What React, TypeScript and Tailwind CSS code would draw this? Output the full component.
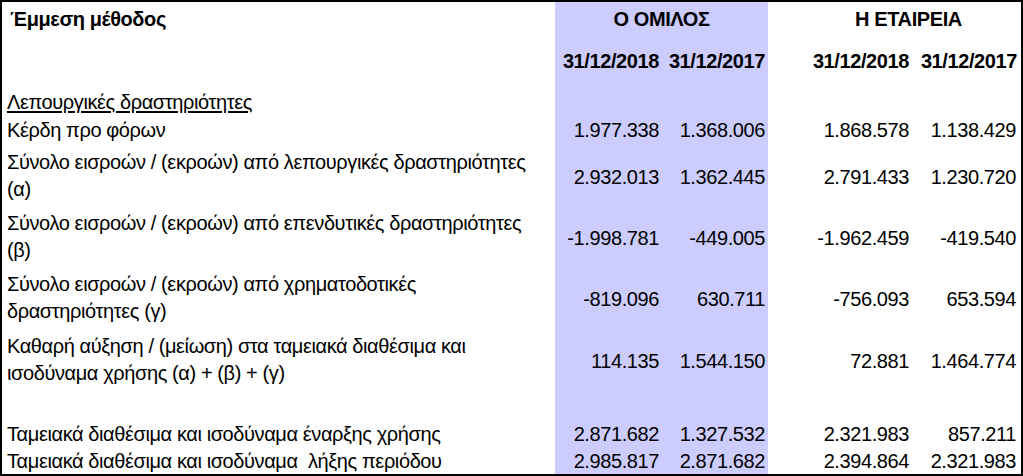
import React from "react"

interface RowData {
  label: React.ReactNode
  values: [string, string, string, string]
  height: string
  twoLine?: boolean
}

const rows: RowData[] = [
  {
    label: "Κέρδη προ φόρων",
    values: ["1.977.338", "1.368.006", "1.868.578", "1.138.429"],
    height: "h-[28px]",
  },
  {
    label: (
      <>
        Σύνολο εισροών / (εκροών) από λεπουργικές δραστηριότητες
        <br />
        (α)
      </>
    ),
    values: ["2.932.013", "1.362.445", "2.791.433", "1.230.720"],
    height: "h-[61px]",
    twoLine: true,
  },
  {
    label: (
      <>
        Σύνολο εισροών / (εκροών) από επενδυτικές δραστηριότητες
        <br />
        (β)
      </>
    ),
    values: ["-1.998.781", "-449.005", "-1.962.459", "-419.540"],
    height: "h-[61px]",
    twoLine: true,
  },
  {
    label: (
      <>
        Σύνολο εισροών / (εκροών) από χρηματοδοτικές
        <br />
        δραστηριότητες (γ)
      </>
    ),
    values: ["-819.096", "630.711", "-756.093", "653.594"],
    height: "h-[62px]",
    twoLine: true,
  },
  {
    label: (
      <>
        Καθαρή αύξηση / (μείωση) στα ταμειακά διαθέσιμα και
        <br />
        ισοδύναμα χρήσης (α) + (β) + (γ)
      </>
    ),
    values: ["114.135", "1.544.150", "72.881", "1.464.774"],
    height: "h-[61px]",
    twoLine: true,
  },
]

const totals: RowData[] = [
  {
    label: "Ταμειακά διαθέσιμα και ισοδύναμα έναρξης χρήσης",
    values: ["2.871.682", "1.327.532", "2.321.983", "857.211"],
    height: "h-[28px]",
  },
  {
    label: "Ταμειακά διαθέσιμα και ισοδύναμα  λήξης περιόδου",
    values: ["2.985.817", "2.871.682", "2.394.864", "2.321.983"],
    height: "h-[26px]",
  },
]

function DataRow({ row }: { row: RowData }) {
  const valueCell = "flex items-center justify-end"
  const pad = row.twoLine ? "pt-[4px]" : ""
  return (
    <div className={`flex ${row.height}`}>
      <div
        className={`w-[553px] pl-[5px] whitespace-pre ${
          row.twoLine ? "pt-[5px] leading-[27px]" : "flex items-center"
        }`}
      >
        {row.label}
      </div>
      <div className={`w-[107px] bg-[#ccccff] pr-[3px] ${valueCell} ${pad}`}>{row.values[0]}</div>
      <div className={`w-[106px] bg-[#ccccff] pr-[3px] ${valueCell} ${pad}`}>{row.values[1]}</div>
      <div className="w-[38px]" />
      <div className={`w-[107px] pr-[4px] ${valueCell} ${pad}`}>{row.values[2]}</div>
      <div className={`w-[108px] pr-[5px] ${valueCell} ${pad}`}>{row.values[3]}</div>
    </div>
  )
}

function Spacer({ height }: { height: string }) {
  return (
    <div className={`flex ${height}`}>
      <div className="w-[553px]" />
      <div className="w-[213px] bg-[#ccccff]" />
    </div>
  )
}

export default function App() {
  return (
    <div
      className="w-[1023px] h-[476px] bg-white border-2 border-black text-black text-[20px] tracking-[-0.4px] overflow-hidden"
      style={{ fontFamily: '"Liberation Sans", Arial, sans-serif' }}
    >
      {/* header */}
      <div className="flex h-[37px] font-bold">
        <div className="w-[553px] pl-[8px] pt-[5px] leading-[24px]">Έμμεση μέθοδος</div>
        <div className="w-[213px] bg-[#ccccff] text-center pt-[5px] leading-[24px]">Ο ΟΜΙΛΟΣ</div>
        <div className="w-[38px]" />
        <div className="w-[215px] pr-[10px] text-center pt-[5px] leading-[24px]">Η ΕΤΑΙΡΕΙΑ</div>
      </div>
      <div className="flex h-[44px] font-bold">
        <div className="w-[553px]" />
        <div className="w-[107px] bg-[#ccccff] flex items-center justify-end pr-[3px]">31/12/2018</div>
        <div className="w-[106px] bg-[#ccccff] flex items-center justify-end pr-[3px]">31/12/2017</div>
        <div className="w-[38px]" />
        <div className="w-[107px] flex items-center justify-end pr-[4px]">31/12/2018</div>
        <div className="w-[108px] flex items-center justify-end pr-[4px]">31/12/2017</div>
      </div>
      <div className="flex h-[33px]">
        <div className="w-[553px] pl-[5px] flex items-end leading-[28px]">
          <span className="underline underline-offset-2">Λεπουργικές δραστηριότητες</span>
        </div>
        <div className="w-[213px] bg-[#ccccff]" />
      </div>
      {rows.map((row, i) => (
        <DataRow key={i} row={row} />
      ))}
      <Spacer height="h-[31px]" />
      {totals.map((row, i) => (
        <DataRow key={i} row={row} />
      ))}
    </div>
  )
}
